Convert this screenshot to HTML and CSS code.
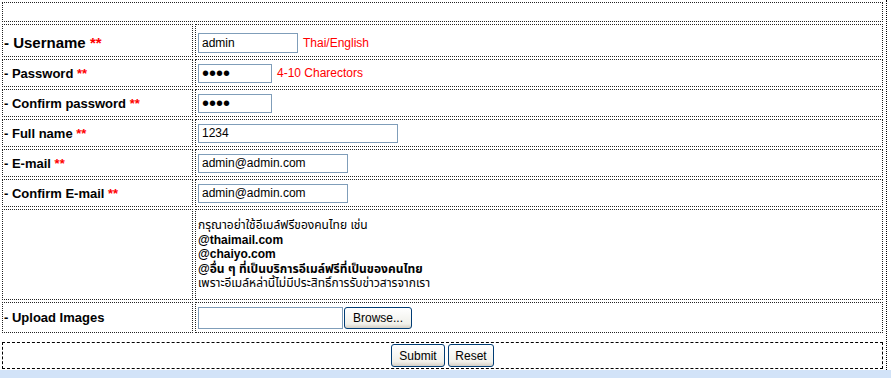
FILE: index.html
```html
<!DOCTYPE html>
<html lang="th">
<head>
  <meta charset="UTF-8" />
  <title>สมัครสมาชิก</title>
  <link rel="stylesheet" href="styles.css">
</head>
<body>
  <div class="page">
    <table class="form">
      <tr><td colspan="2" class="top"></td></tr>
      <tr class="row-big">
        <td class="label big">- Username <em>**</em></td>
        <td class="field"><input type="text" class="w100" value="admin"><span class="hint">Thai/English</span></td>
      </tr>
      <tr>
        <td class="label">- Password <em>**</em></td>
        <td class="field"><input type="password" class="w74 pass" value="1234"><span class="hint">4-10 Charectors</span></td>
      </tr>
      <tr>
        <td class="label">- Confirm password <em>**</em></td>
        <td class="field"><input type="password" class="w74 pass" value="1234"></td>
      </tr>
      <tr>
        <td class="label">- Full name <em>**</em></td>
        <td class="field"><input type="text" class="w200" value="1234"></td>
      </tr>
      <tr>
        <td class="label">- E-mail <em>**</em></td>
        <td class="field"><input type="text" class="w150" value="admin@admin.com"></td>
      </tr>
      <tr>
        <td class="label">- Confirm E-mail <em>**</em></td>
        <td class="field"><input type="text" class="w150" value="admin@admin.com"></td>
      </tr>
      <tr class="row-note">
        <td class="label"></td>
        <td class="field note">
          กรุณาอย่าใช้อีเมล์ฟรีของคนไทย เช่น<br>
          <b>@thaimail.com</b><br>
          <b>@chaiyo.com</b><br>
          <b>@อื่น ๆ ที่เป็นบริการอีเมล์ฟรีที่เป็นของคนไทย</b><br>
          เพราะอีเมล์หล่านี้ไม่มีประสิทธิ์การรับข่าวสารจากเรา
        </td>
      </tr>
      <tr class="row-upload">
        <td class="label">- Upload Images</td>
        <td class="field"><span class="file"><span class="file-box"></span><button type="button" class="btn">Browse...</button></span></td>
      </tr>
    </table>
    <div class="actions">
      <button type="submit" class="btn">Submit</button>
      <button type="reset" class="btn">Reset</button>
    </div>
  </div>
  <div class="strip"></div>
</body>
</html>
```

FILE: styles.css
```css
* {box-sizing: border-box;}
body {
  margin: 0;
  font-family: "Liberation Sans", Arial, sans-serif;
  font-size: 12px;
  color: #000;
  background: #fff;
}

.page {
  width: 887px;
  border-right: 1px dotted #000;
  padding-bottom: 1px;
}

.form {
  width: 885px;
  border-collapse: separate;
  border-spacing: 2px;
}
.form td {
  border: 1px dotted #222;
  padding: 0 1px;
  vertical-align: middle;
  height: 28px;
}
.form td.top {height: 20px;}
.row-big td {height: 33px; padding-top: 4px;}
.row-note td {height: 91px;}
.row-upload td {height: 31px;}

.label {
  width: 191px;
  font-size: 13px;
  font-weight: bold;
  white-space: nowrap;
}
.label.big {font-size: 15px;}
.label em {
  font-style: normal;
  color: #f00;
}

.field {padding-left: 2px !important;}

.field input {
  height: 19px;
  border: 1px solid #7f9db9;
  padding: 0 3px;
  font-family: "Liberation Sans", Arial, sans-serif;
  font-size: 12px;
  vertical-align: middle;
  margin: 0;
}
.row-big .field input {height: 20px;}
.field input.pass {
  font-size: 20px;
  letter-spacing: 0;
  padding-left: 3px;
}
.w74 {width: 74px;}
.w100 {width: 100px;}
.w150 {width: 150px;}
.w200 {width: 200px;}

.hint {
  margin-left: 5px;
  color: #f00;
  font-size: 12px;
  vertical-align: middle;
}

.note {
  font-size: 12px;
  line-height: 14.5px;
  font-family: "Liberation Sans", "Noto Sans Thai", "Noto Sans", sans-serif;
}

.file {
  display: inline-flex;
  align-items: center;
  gap: 1px;
  vertical-align: middle;
}
.file-box {
  width: 145px;
  height: 22px;
  border: 1px solid #7f9db9;
}

.btn {
  font-family: "Liberation Sans", Arial, sans-serif;
  font-size: 12px;
  color: #000;
  height: 22px;
  padding: 0 5px;
  border: 1px solid #003c74;
  border-radius: 3px;
  background: linear-gradient(to bottom, #ffffff, #f0f0ea 80%, #d6d0c5);
  margin: 0;
}
.file .btn {width: 68px; height: 22px;}

.actions {
  margin: 7px 0 0 2px;
  width: 881px;
  height: 27px;
  border: 1px dashed #000;
  display: flex;
  justify-content: center;
  align-items: center;
  gap: 3px;
}
.actions .btn {height: 23px;}
.actions .btn:first-child {width: 54px;}
.actions .btn:last-child {width: 46px;}

.strip {
  height: 10px;
  background: #d2e3f8;
}
```
